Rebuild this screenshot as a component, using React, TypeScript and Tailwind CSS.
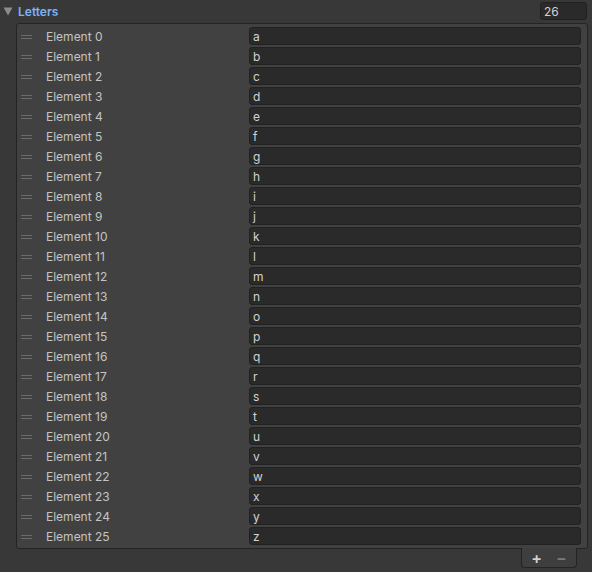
import React from "react";

const letters = "abcdefghijklmnopqrstuvwxyz".split("");

function Handle() {
  return (
    <div className="flex w-[11px] flex-col gap-[2px]">
      <div className="h-px bg-[#6b6b6b]" />
      <div className="h-px bg-[#6b6b6b]" />
    </div>
  );
}

export default function App() {
  return (
    <div className="h-[572px] w-[592px] overflow-hidden bg-[#383838] font-['Inter',sans-serif] text-[12px]">
      {/* Header */}
      <div className="flex h-[23px] items-start">
        <svg className="ml-[3px] mt-[7px] h-[9px] w-[10px]" viewBox="0 0 10 9">
          <path d="M0.5 0.5 L9.5 0.5 L5 8.5 Z" fill="#8c8c8c" />
        </svg>
        <span className="ml-[5px] mt-[4px] font-semibold leading-[16px] text-[#7cb3f6]">Letters</span>
        <div className="ml-auto mr-[5px] mt-[2px] flex h-[18px] w-[47px] items-center rounded-[3px] border border-[#212121] bg-[#2a2a2a] pl-[3px] pt-px text-[#d2d2d2]">
          26
        </div>
      </div>

      {/* List panel */}
      <div className="ml-[16px] mr-[4px] rounded-[3px] border border-[#242424] bg-[#414141] py-[2px]">
        {letters.map((l, i) => (
          <div key={i} className="flex h-[20px] items-center">
            <div className="ml-[4px] mt-[1px]">
              <Handle />
            </div>
            <span className="ml-[14px] w-[203px] pt-[2px] text-[#c4c4c4]">Element {i}</span>
            <div className="mr-[6px] flex h-[18px] flex-1 items-center rounded-[3px] border border-[#212121] bg-[#2a2a2a] pl-[3px] pt-[2px] text-[#d2d2d2]">
              {l}
            </div>
          </div>
        ))}
      </div>

      {/* Footer +/- */}
      <div className="flex justify-end">
        <div className="-mt-px mr-[15px] flex h-[20px] w-[56px] items-center justify-center gap-[14px] rounded-b-[4px] border border-t-0 border-[#242424] bg-[#3e3e3e]">
          <span className="text-[16px] font-semibold leading-none text-[#d0d0d0]">+</span>
          <span className="text-[16px] font-semibold leading-none text-[#7a7a7a]">−</span>
        </div>
      </div>
    </div>
  );
}
